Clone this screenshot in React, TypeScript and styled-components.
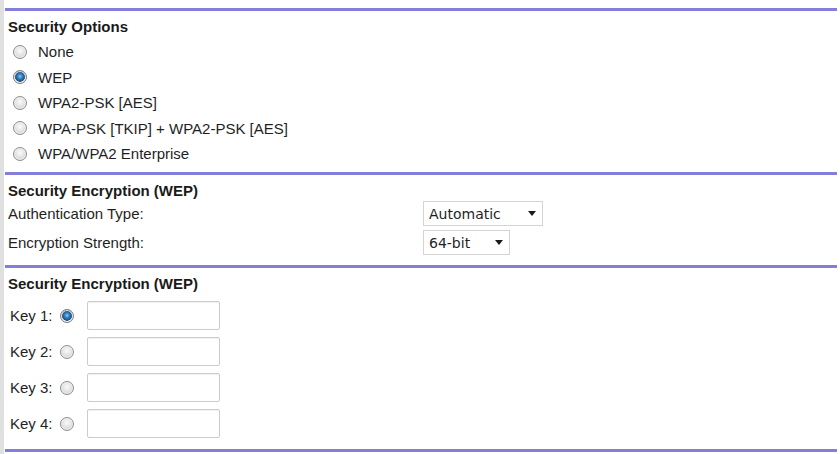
import { useState } from "react";
import styled, { createGlobalStyle } from "styled-components";

const GlobalStyle = createGlobalStyle`
  html, body {
    margin: 0;
    padding: 0;
    background: #ffffff;
  }
  body {
    font-family: "Liberation Sans", Arial, sans-serif;
    color: #1f1f1f;
  }
`;

const Page = styled.div`
  border-left: 4px solid #e0e0e0;
  padding: 8px 3px 2px 1px;
  min-height: 444px;
`;

const Section = styled.section<{ $last?: boolean }>`
  border-top: 3px solid #827ed9;
  border-bottom: ${(p) => (p.$last ? "3px solid #827ed9" : "none")};
  padding: 6px 3px 0;
`;

const Heading = styled.h3`
  margin: 0;
  font-size: 15px;
  font-weight: bold;
  line-height: 20px;
  color: #1a1a1a;
`;

const OptionList = styled.div`
  display: flex;
  flex-direction: column;
  padding: 2px 0 5px;
`;

const OptionRow = styled.label`
  display: flex;
  align-items: center;
  gap: 11px;
  height: 25.5px;
  padding-left: 5px;
  font-size: 15px;
  cursor: pointer;
`;

const Radio = styled.input.attrs({ type: "radio" })`
  appearance: none;
  -webkit-appearance: none;
  margin: 0;
  width: 14px;
  height: 14px;
  border-radius: 50%;
  border: 1px solid #8e8e8e;
  background: radial-gradient(circle at 50% 40%, #fbfbfb 0%, #e2e2e2 50%, #bdbdbd 100%);
  box-shadow: inset 0 0 0 1px #f2f2f2;
  flex: none;
  cursor: pointer;

  &:checked {
    border-color: #7d7d7d;
    background: radial-gradient(
      circle at 50% 45%,
      #8fcbf0 0%,
      #3584c4 25%,
      #1b5487 52%,
      #15426b 58%,
      #e6e6e6 64%,
      #c4c4c4 100%
    );
  }
`;

const FieldGrid = styled.div`
  display: grid;
  grid-template-columns: 415px auto;
  grid-auto-rows: 26px;
  row-gap: 3px;
  align-items: center;
  padding: 0 0 9px;
  font-size: 15px;
`;

const SelectWrap = styled.div<{ $w: number }>`
  position: relative;
  width: ${(p) => p.$w}px;
  height: 25px;
`;

const Select = styled.select`
  appearance: none;
  -webkit-appearance: none;
  width: 100%;
  height: 100%;
  margin: 0;
  padding: 0 22px 0 5px;
  border: 1px solid #d4d4d4;
  border-radius: 0;
  background: #ffffff;
  font-family: "DejaVu Sans", Tahoma, sans-serif;
  font-size: 14px;
  color: #1f1f1f;
`;

const Arrow = styled.span`
  position: absolute;
  right: 7px;
  top: 10px;
  width: 0;
  height: 0;
  border-left: 4px solid transparent;
  border-right: 4px solid transparent;
  border-top: 5px solid #1a1a1a;
  pointer-events: none;
`;

const KeyList = styled.div`
  display: flex;
  flex-direction: column;
  gap: 6px;
  padding: 7px 0 10px 2px;
`;

const KeyRow = styled.div`
  display: flex;
  align-items: center;
  height: 30px;
  font-size: 15px;
`;

const KeyLabel = styled.label`
  width: 50px;
`;

const KeyInput = styled.input`
  margin-left: 13px;
  width: 133px;
  height: 29px;
  box-sizing: border-box;
  border: 1px solid #cccccc;
  border-radius: 2px;
  box-shadow: inset 0 1px 1px rgba(0, 0, 0, 0.06);
  padding: 0 5px;
  font-size: 14px;
`;

const securityOptions = [
  "None",
  "WEP",
  "WPA2-PSK [AES]",
  "WPA-PSK [TKIP] + WPA2-PSK [AES]",
  "WPA/WPA2 Enterprise",
];

function Dropdown({ width, value, options }: { width: number; value: string; options: string[] }) {
  return (
    <SelectWrap $w={width}>
      <Select defaultValue={value}>
        {options.map((o) => (
          <option key={o}>{o}</option>
        ))}
      </Select>
      <Arrow />
    </SelectWrap>
  );
}

export default function App() {
  const [security, setSecurity] = useState("WEP");
  const [activeKey, setActiveKey] = useState(1);

  return (
    <Page>
      <GlobalStyle />
      <Section>
        <Heading>Security Options</Heading>
        <OptionList>
          {securityOptions.map((opt) => (
            <OptionRow key={opt}>
              <Radio
                name="security"
                checked={security === opt}
                onChange={() => setSecurity(opt)}
              />
              {opt}
            </OptionRow>
          ))}
        </OptionList>
      </Section>

      <Section>
        <Heading>Security Encryption (WEP)</Heading>
        <FieldGrid>
          <span>Authentication Type:</span>
          <Dropdown width={120} value="Automatic" options={["Automatic", "Open System", "Shared Key"]} />
          <span>Encryption Strength:</span>
          <Dropdown width={87} value="64-bit" options={["64-bit", "128-bit"]} />
        </FieldGrid>
      </Section>

      <Section $last>
        <Heading>Security Encryption (WEP)</Heading>
        <KeyList>
          {[1, 2, 3, 4].map((n) => (
            <KeyRow key={n}>
              <KeyLabel htmlFor={`key${n}`}>Key {n}:</KeyLabel>
              <Radio
                name="wepkey"
                checked={activeKey === n}
                onChange={() => setActiveKey(n)}
              />
              <KeyInput id={`key${n}`} type="text" />
            </KeyRow>
          ))}
        </KeyList>
      </Section>
    </Page>
  );
}
